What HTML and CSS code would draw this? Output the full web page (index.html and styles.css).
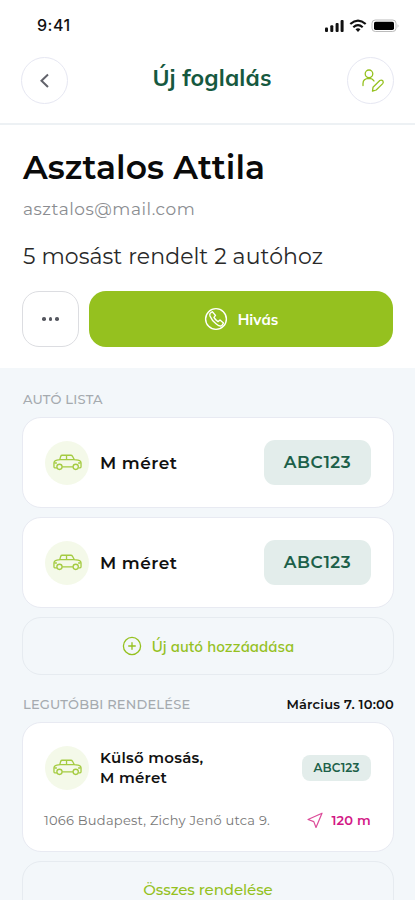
FILE: index.html
```html
<!DOCTYPE html>
<html lang="hu">
<head>
<meta charset="utf-8">
<meta name="viewport" content="width=device-width, initial-scale=1">
<title>Új foglalás</title>
<link rel="stylesheet" href="styles.css">
</head>
<body>
<svg class="defs" aria-hidden="true">
  <symbol id="car" viewBox="0 0 30 18">
    <path d="M4 14H1.8Q1 14 1 13V9Q1 6.5 4 6L7 5.5L8 2Q8.3 1 9.5 1H18.5Q19.6 1 20.2 2L22 5.5L26 6Q29 6.5 29 9V13Q29 14 28 14H26.5M9.5 13H20.7M7 5.5H22M14 1V5.5"/>
    <circle cx="6.7" cy="13" r="2.7"/><circle cx="23.5" cy="13" r="2.7"/>
    <path d="M1.5 9H4M26 9H28.5"/>
  </symbol>
</svg>
<main class="screen">
  <div class="status">
    <span class="time">9:41</span>
    <svg class="signals" width="76" height="14" viewBox="0 0 76 14">
      <g fill="#111"><rect x="1" y="8.5" width="3" height="4.5" rx="1"/><rect x="6.3" y="6.3" width="3" height="6.7" rx="1"/><rect x="11.6" y="4" width="3" height="9" rx="1"/><rect x="16.6" y="1" width="3" height="12" rx="1"/></g>
      <g fill="none" stroke="#111" stroke-width="2.2"><path d="M26.3 5Q34 -1.8 41.7 5"/><path d="M29.3 8.2Q34 4 38.7 8.2"/></g>
      <path d="M31.5 10.3Q34 8.3 36.5 10.3L34 13Z" fill="#111"/>
      <rect x="48" y="1" width="24" height="11.5" rx="3.3" fill="none" stroke="#bbb"/>
      <rect x="50" y="2.7" width="20" height="8.2" rx="1.6" fill="#000"/><path d="M73.7 5V9Q75.3 7 73.7 5Z" fill="#aaa"/>
    </svg>
  </div>
  <header class="header">
    <button class="round"><svg width="46" height="46" viewBox="0 0 46 46"><path d="M26 16.5L19.5 22.7L26 29" fill="none" stroke="#62636b" stroke-width="2"/></svg></button>
    <h1 class="title">Új foglalás</h1>
    <button class="round"><svg class="green" width="46" height="46" viewBox="0 0 46 46"><circle cx="21" cy="15.8" r="3.8"/><path d="M15 27.5V25.5Q15 20.6 21 20.4Q24.5 20.5 26 23"/><path d="M24.5 33.2L25 29.3L31.8 22.5Q33.6 21.5 34.8 22.8Q35.8 24.2 34.7 25.6L28.2 32Z"/></svg></button>
  </header>
  <section class="profile">
    <h2 class="name">Asztalos Attila</h2>
    <p class="mail">asztalos@mail.com</p>
    <p class="summary">5 mosást rendelt 2 autóhoz</p>
    <div class="actions">
      <button class="more"><i></i><i></i><i></i></button>
      <button class="call"><svg width="24" height="24" viewBox="0 0 24 24"><circle cx="12" cy="12" r="10.4"/><path d="M6.2 6.2L8.3 4.7L11.5 8.4L10 10.4Q11.3 13 14 14.6L16 13L19.5 16L17.8 18.7Q15.8 19.8 12.3 17Q7.8 13.6 6 9Q5.5 7.2 6.2 6.2Z"/></svg><span>Hivás</span></button>
    </div>
  </section>
  <section class="content">
    <div class="label-row"><h3 class="label">AUTÓ LISTA</h3></div>
    <article class="card car">
      <span class="avatar"><svg><use href="#car"/></svg></span><span class="size">M méret</span><span class="plate">ABC123</span>
    </article>
    <article class="card car">
      <span class="avatar"><svg><use href="#car"/></svg></span><span class="size">M méret</span><span class="plate">ABC123</span>
    </article>
    <button class="outline"><svg class="green" width="20" height="20" viewBox="0 0 20 20"><circle cx="10" cy="10" r="8.6"/><path d="M10 6.7V13.3M6.7 10H13.3"/></svg><span class="add">Új autó hozzáadása</span></button>
    <div class="label-row second"><h3 class="label">LEGUTÓBBI RENDELÉSE</h3><span class="date">Március 7. 10:00</span></div>
    <article class="card order">
      <div class="order-top"><span class="avatar"><svg><use href="#car"/></svg></span><span class="service">Külső mosás,<br>M méret</span><span class="plate small">ABC123</span></div>
      <div class="order-bottom"><span class="address">1066 Budapest, Zichy Jenő utca 9.</span><span class="distance"><svg width="16" height="17" viewBox="0 0 16 17"><path d="M1 7.5L15 1.2L9 15.5L6.8 9.6Z"/></svg><span>120 m</span></span></div>
    </article>
    <button class="outline"><span class="all">Összes rendelése</span></button>
  </section>
</main>
</body>
</html>
```
FILE: styles.css
```css
* { box-sizing: border-box; }
body { margin: 0; background: #fff; font-family: Montserrat, Inter, sans-serif; color: #111; }
h1, h2, h3, p { margin: 0; }
button { padding: 0; font: inherit; background: none; border: 0; }
svg { display: block; flex: none; }
.defs { width: 0; height: 0; position: absolute; }
.screen { height: 900px; overflow: hidden; }
.status { height: 56px; padding: 15px 15px 0 37px; display: flex; justify-content: space-between; align-items: flex-start; }
.time { font: 500 16px/21px Inter, sans-serif; letter-spacing: .5px; }
.signals { margin-top: 4px; }
.header { height: 69px; padding: 1px 21px 0; border-bottom: 2px solid #edf1f4; display: flex; justify-content: space-between; align-items: flex-start; }
.round { width: 47px; height: 47px; border: 1px solid #e6e7f2; border-radius: 50%; }
.title { padding-left: 9px; font: 700 23px/42px Mulish, "Nunito Sans", Lato, sans-serif; color: #16593f; letter-spacing: .15px; }
.green { fill: none; stroke: #95c11f; stroke-width: 1.3; stroke-linejoin: round; stroke-linecap: round; }
.profile { height: 243px; padding: 21px 22px 0; white-space: nowrap; }
.name { padding-left: 1px; font-size: 33px; line-height: 42px; font-weight: 600; letter-spacing: .1px; color: #0a0a0a; }
.mail { margin-top: 9px; padding-left: 1px; font-size: 17px; line-height: 24px; color: #8b8d91; letter-spacing: .52px; }
.summary { margin-top: 22px; padding-left: 1px; font-size: 22px; line-height: 28px; color: #292929; letter-spacing: .08px; }
.actions { margin-top: 20px; display: flex; gap: 10px; }
.more { width: 57px; height: 56px; border: 1px solid #dcdde1; border-radius: 17px; display: flex; align-items: center; justify-content: center; gap: 3px; }
.more i { width: 3.5px; height: 3.5px; border-radius: 50%; background: #565860; }
.call { flex: 1; height: 56px; border-radius: 17px; background: #95c11f; color: #fff; display: flex; align-items: center; justify-content: center; gap: 10px; font: 700 15px Mulish, "Nunito Sans", Lato, sans-serif; }
.call svg { fill: none; stroke: #fff; stroke-width: 1.4; stroke-linejoin: round; }
.content { min-height: 532px; padding: 21px 21px 0 22px; background: #f3f7fa; white-space: nowrap; }
.label-row { height: 28px; display: flex; justify-content: space-between; line-height: 20px; }
.second { margin-top: 19px; }
.label { padding-left: 1px; font-size: 13px; font-weight: 500; color: #a5aaaf; letter-spacing: .2px; }
.date { font-size: 13px; font-weight: 600; letter-spacing: .2px; }
.card { background: #fff; border: 1px solid #e8eaf2; border-radius: 19px; }
.car { height: 91px; margin-bottom: 9px; padding: 0 22px; display: flex; align-items: center; }
.avatar { flex: none; width: 44px; height: 44px; border-radius: 50%; background: #f4f9e9; display: flex; align-items: center; justify-content: center; }
.avatar svg { width: 29px; height: 18px; fill: none; stroke: #a4cb40; stroke-width: 1.35; }
.size { margin-left: 11px; font-size: 17px; font-weight: 600; letter-spacing: .45px; }
.plate { margin-left: auto; width: 107px; height: 45px; line-height: 45px; border-radius: 11px; background: #e3edeb; color: #1c6049; text-align: center; font-size: 17px; font-weight: 600; letter-spacing: .5px; }
.outline { width: 100%; height: 58px; border: 1px solid #e6ebf0; border-radius: 19px; color: #95c11f; display: flex; align-items: center; justify-content: center; gap: 10px; font-size: 15px; font-weight: 500; }
.add { font-family: Mulish, "Nunito Sans", Lato, sans-serif; font-size: 15px; font-weight: 600; letter-spacing: .08px; }
.all { margin-top: -2px; letter-spacing: -.1px; }
.order { height: 130px; margin-bottom: 9px; padding: 21px 22px 0; }
.order-top { height: 48px; display: flex; align-items: center; }
.service { margin-left: 11px; font-size: 15px; line-height: 20px; font-weight: 600; letter-spacing: .25px; }
.small { width: 69px; height: 26px; line-height: 26px; font-size: 12px; border-radius: 8px; letter-spacing: .1px; }
.order-bottom { margin-top: 17px; height: 22px; display: flex; justify-content: space-between; align-items: center; font-size: 13px; }
.address { margin-left: -1px; color: #777; letter-spacing: .25px; }
.distance { display: flex; align-items: center; gap: 8px; color: #d31786; font-weight: 600; letter-spacing: .2px; }
.distance svg { fill: none; stroke: #dc4b99; stroke-width: 1.2; stroke-linejoin: round; }
```
